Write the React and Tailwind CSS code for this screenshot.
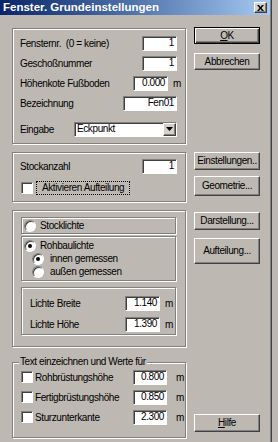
// App.jsx - Fenster. Grundeinstellungen dialog (Win classic look)

const sunken = 'bg-white border border-t-[#808080] border-l-[#808080] border-b-white border-r-white shadow-[inset_1px_1px_0_#404040]'
const etched = 'border border-[#808080] shadow-[inset_1px_1px_0_#fff,1px_1px_0_#fff]'
const raised = 'border border-t-white border-l-white border-b-[#404040] border-r-[#404040] shadow-[inset_-1px_-1px_0_#808080]'

function Field({ value, className }) {
  return (
    <div className={sunken + ' h-[15px] flex items-center justify-end pr-[2px] leading-none ' + className}>
      {value}
    </div>
  )
}

function Check() {
  return <div className={sunken + ' w-[12px] h-[12px] shrink-0'}></div>
}

function Radio({ checked }) {
  return (
    <div className="w-[12px] h-[12px] shrink-0 rounded-full bg-white border border-t-[#808080] border-l-[#808080] border-b-white border-r-white shadow-[inset_1px_1px_0_#404040] flex items-center justify-center">
      {checked && <div className="w-[4px] h-[4px] rounded-full bg-black"></div>}
    </div>
  )
}

function Button({ children, className }) {
  return (
    <div className={raised + ' w-[66px] flex items-center justify-center leading-none ' + className}>
      {children}
    </div>
  )
}

function App() {
  return (
    <div className="w-[278px] h-[442px] bg-[#bdb9b2] text-black text-[10px] tracking-[-0.4px] font-[family-name:'Liberation_Sans',Arial,sans-serif] overflow-hidden">
      <div className="w-[272px] h-full border-r border-r-[#404040] shadow-[inset_-1px_0_0_#808080]">
        {/* title bar */}
        <div className="h-[15px] w-[270px] flex items-center bg-gradient-to-r from-[#0a246a] to-[#a6caf0]">
          <span className="ml-[3px] text-white font-bold text-[11.5px] tracking-normal leading-none">Fenster. Grundeinstellungen</span>
          <div className={raised + ' ml-auto mr-[3px] w-[13px] h-[11px] bg-[#d4d0c8] flex items-center justify-center'}>
            <svg width="7" height="6" viewBox="0 0 7 6">
              <path d="M0 0h2l1.5 2 1.5-2h2l-2.5 3 2.5 3h-2l-1.5-2-1.5 2h-2l2.5-3z" fill="#000" />
            </svg>
          </div>
        </div>

        <div className="flex mt-[12px] pl-[12px]">
          {/* left column */}
          <div className="w-[174px] flex flex-col pt-[1px]">
            <div className={etched + ' h-[116px] pt-[4px] pl-[7px] pr-[8px]'}>
              <div className="flex items-center h-[20px]">
                <span>Fensternr.&nbsp;&nbsp;(0 = keine)</span>
                <Field value="1" className="ml-auto w-[35px]" />
              </div>
              <div className="flex items-center h-[20px]">
                <span>Geschoßnummer</span>
                <Field value="1" className="ml-auto w-[35px]" />
              </div>
              <div className="flex items-center h-[20px]">
                <span>Höhenkote Fußboden</span>
                <div className="ml-auto mr-[-4px] flex items-center">
                  <Field value="0.000" className="w-[35px]" />
                  <span className="ml-[5px] w-[8px]">m</span>
                </div>
              </div>
              <div className="flex items-center h-[20px]">
                <span>Bezeichnung</span>
                <Field value="Fen01" className="ml-auto w-[54px]" />
              </div>
              <div className="flex items-center h-[22px] mt-[5px]">
                <span>Eingabe</span>
                <div className={sunken + ' ml-auto w-[103px] h-[15px] flex items-center'}>
                  <span className="pl-[2px] leading-none">Eckpunkt</span>
                  <div className={raised + ' ml-auto w-[13px] h-[13px] bg-[#d4d0c8] flex items-center justify-center'}>
                    <svg width="7" height="4" viewBox="0 0 7 4">
                      <path d="M0 0h7l-3.5 4z" fill="#000" />
                    </svg>
                  </div>
                </div>
              </div>
            </div>

            <div className={etched + ' mt-[8px] h-[50px] pt-[3px] pl-[7px] pr-[8px]'}>
              <div className="flex items-center h-[20px]">
                <span>Stockanzahl</span>
                <Field value="1" className="ml-auto w-[35px]" />
              </div>
              <div className="flex items-center h-[20px] mt-[2px]">
                <div className="ml-[1px]"><Check /></div>
                <span className="ml-[3px] h-[14px] px-[5px] flex items-center border border-dotted border-black leading-none">Aktivieren Aufteilung</span>
              </div>
            </div>

            <div className={etched + ' mt-[8px] h-[137px] pt-[6px] pl-[8px] pr-[9px]'}>
              <div className={etched + ' h-[17px] pl-[2px] flex items-center'}>
                <Radio />
                <span className="ml-[4px] leading-none">Stocklichte</span>
              </div>
              <div className={etched + ' mt-[2px] h-[45px] pt-[2px]'}>
                <div className="flex items-center h-[13px] pl-[2px]">
                  <Radio checked />
                  <span className="ml-[4px] leading-none">Rohbaulichte</span>
                </div>
                <div className="flex items-center h-[13px] pl-[10px]">
                  <Radio checked />
                  <span className="ml-[6px] leading-none">innen gemessen</span>
                </div>
                <div className="flex items-center h-[13px] pl-[10px]">
                  <Radio />
                  <span className="ml-[6px] leading-none">außen gemessen</span>
                </div>
              </div>
              <div className={etched + ' mt-[6px] h-[48px] pt-[5px] pl-[8px] pr-[2px]'}>
                <div className="flex items-center h-[20px]">
                  <span>Lichte Breite</span>
                  <div className="ml-auto flex items-center">
                    <Field value="1.140" className="w-[35px]" />
                    <span className="ml-[5px] w-[8px]">m</span>
                  </div>
                </div>
                <div className="flex items-center h-[20px] mt-[1px]">
                  <span>Lichte Höhe</span>
                  <div className="ml-auto flex items-center">
                    <Field value="1.390" className="w-[35px]" />
                    <span className="ml-[5px] w-[8px]">m</span>
                  </div>
                </div>
              </div>
            </div>

            <div className={etched + ' relative mt-[15px] h-[76px] pt-[4px] pl-[7px] pr-[8px]'}>
              <span className="absolute left-[6px] top-[-7px] px-[1px] bg-[#bdb9b2] leading-[12px]">Text einzeichnen und Werte für</span>
              {[['Rohbrüstungshöhe', '0.800'], ['Fertigbrüstungshöhe', '0.850'], ['Sturzunterkante', '2.300']].map(function (row) {
                return (
                  <div key={row[0]} className="flex items-center h-[20px]">
                    <div className="ml-[1px]"><Check /></div>
                    <span className="ml-[2px]">{row[0]}</span>
                    <div className="ml-auto mr-[-7px] flex items-center">
                      <Field value={row[1]} className="w-[34px]" />
                      <span className="ml-[9px] w-[8px]">m</span>
                    </div>
                  </div>
                )
              })}
            </div>
          </div>

          {/* right column */}
          <div className="ml-[8px] w-[66px] flex flex-col">
            <div className="w-[66px] h-[17px] border border-black shadow-[inset_1px_1px_0_#fff,inset_-1px_-1px_0_#404040,inset_-2px_-2px_0_#808080] flex items-center justify-center leading-none">
              <span><span className="underline">O</span>K</span>
            </div>
            <Button className="mt-[9px] h-[17px]">Abbrechen</Button>
            <Button className="mt-[82px] h-[18px]">Einstellungen..</Button>
            <Button className="mt-[6px] h-[20px]">Geometrie...</Button>
            <Button className="mt-[16px] h-[18px]">Darstellung...</Button>
            <Button className="mt-[8px] h-[26px]">Aufteilung...</Button>
            <Button className="mt-[150px] h-[18px]"><span><span className="underline">H</span>ilfe</span></Button>
          </div>
        </div>
      </div>
    </div>
  )
}

export default App
